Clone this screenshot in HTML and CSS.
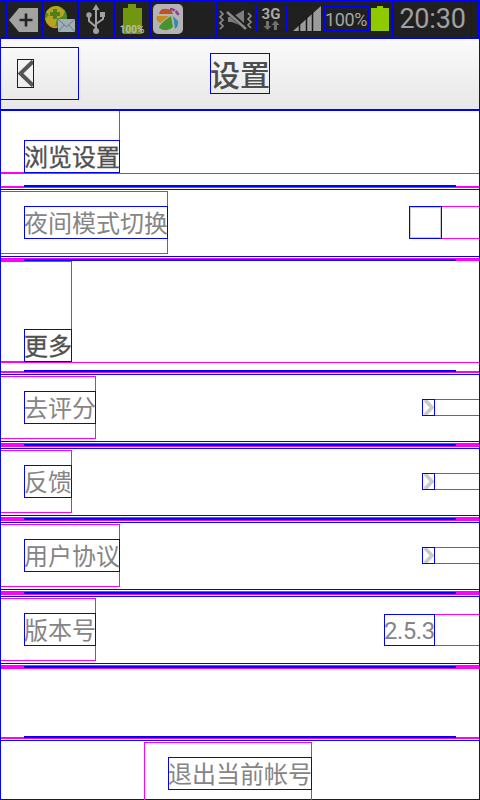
FILE: index.html
```html
<!DOCTYPE html>
<html lang="zh-CN">
<head>
<meta charset="utf-8">
<title>设置</title>
<link rel="stylesheet" href="styles.css">
</head>
<body>
<div class="status">
  <div class="cell"><svg width="34" height="35" viewBox="0 0 34 35"><path d="M12 7H31V31H12L2 19Z" fill="#a2a2a2"/><path d="M19 12.500V25.500M12.500 19H25.500" stroke="#242424" stroke-width="2.600"/></svg></div>
  <div class="cell"><svg width="34" height="35" viewBox="0 0 34 35"><circle cx="13" cy="16" r="11" fill="#4d8b27"/><path d="M3 11Q8 4 15 5L22 10L20 15L14 18L12 26Q4 25 2 18L6 14Z" fill="#b8a222"/><path d="M4 21Q8 27 14 26" stroke="#c39b24" stroke-width="2" fill="none"/><path d="M12 8V18M7 13H17" stroke="#517f1a" stroke-width="4"/><path d="M15 18H32V31H15Z" fill="#a0afb5"/><path d="M15 18L23.500 26L32 18M15 31L21 24M32 31L26 24" fill="none" stroke="#687984"/></svg></div>
  <div class="cell"><svg width="34" height="35" viewBox="0 0 34 35" fill="none" stroke="#a0a0a0" stroke-width="2"><path d="M17 7V30M10 15V20L17 26M24 15V18L17 23"/><path d="M17 3L20.500 9H13.500Z" fill="#a0a0a0" stroke="none"/><circle cx="10" cy="14" r="2.700" fill="#a0a0a0" stroke="none"/><path d="M21 11H26V16H21Z" fill="#a0a0a0" stroke="none"/><circle cx="17" cy="30" r="3" fill="#a0a0a0" stroke="none"/></svg></div>
  <div class="cell"><svg width="34" height="35" viewBox="0 0 34 35"><path d="M13 3H21V7H27V33H8V7H13Z" fill="#719611"/><text x="17" y="31.500" text-anchor="middle" class="tiny">100%</text></svg></div>
  <div class="cell"><svg width="34" height="35" viewBox="0 0 34 35"><rect x="2" y="3" width="30" height="30" rx="5" fill="#b4b4b4"/><path d="M8 13Q9 7 16 8Q21 8 22 13Z" fill="#c15120"/><path d="M19 8Q25 8 28 15" stroke="#8a3a9a" stroke-width="2.500" fill="none" stroke-dasharray="5 1"/><path d="M6 15H18L9 22Q4 19 6 15Z" fill="#c8891f"/><path d="M20 15L22 26Q16 32 8 27Q8 23 20 15Z" fill="#46942b"/><path d="M22 15L27 20Q28 25 24 28Z" fill="#328daf"/></svg></div>
  <div class="cell mute"><svg width="35" height="35" viewBox="0 0 35 35"><path d="M10 16H14L26 9V26L14 21H10Z" fill="#7d7d7d"/><path d="M8 9L29 28" stroke="#202020" stroke-width="5"/><path d="M9 11L28 28" stroke="#8a8a8a" stroke-width="2.500"/><path d="M3 10L6 13L3 16L6 19L3 22L6 25L3 28M31 12L34 15L31 18L34 21L31 24L34 27" transform="translate(-1 0)" stroke="#8d8d8d" stroke-width="1.700" fill="none"/></svg></div>
  <div class="box net"><svg width="29" height="25" viewBox="0 0 29 25"><text x="14" y="13" text-anchor="middle" class="net-text">3G</text><path d="M9 15H12V20H14.500L10.500 24L6.500 20H9Z" fill="#707070"/><path d="M17 24V19H14.500L18.500 14.500L22.500 19H20V24Z" fill="#707070"/></svg></div>
  <div class="box signal"><svg width="36" height="25" viewBox="0 0 36 25"><path d="M6 25L34 0V25Z" fill="#9b9b9b"/><path d="M12.500 17V25M19.500 11V25M25.500 6V25" stroke="#171717" stroke-width="1.500"/></svg></div>
  <div class="box percent"><span>100%</span></div>
  <div class="box battery"><svg width="22" height="25" viewBox="0 0 22 25"><path d="M8 0H14V2H20V25H2V2H8Z" fill="#8fc900"/></svg></div>
  <div class="clock"><span>20:30</span></div>
  <div class="edge"></div>
</div>
<main class="screen">
  <header class="header">
    <div class="back"><svg width="17" height="29" viewBox="0 0 17 29"><path d="M16 2.500L3.500 14.500L16 26.500" fill="none" stroke="#555" stroke-width="4"/><rect x=".5" y=".5" width="16" height="28" fill="none" stroke="#0000ff"/></svg></div>
    <h1 class="title">设置</h1>
  </header>

  <section class="section first"><div class="wrap"><h2 class="label">浏览设置</h2></div></section>
  <div class="divider half"><i></i></div>
  <div class="row"><div class="wrap"><span class="label">夜间模式切换</span></div><div class="control check"><b></b></div></div>
  <div class="divider short"><i></i></div>

  <section class="section second"><div class="wrap"><h2 class="label">更多</h2></div></section>
  <div class="divider half"><i></i></div>
  <div class="row"><div class="wrap"><span class="label">去评分</span></div><div class="control arrow"><svg width="13" height="17" viewBox="0 0 13 17"><path d="M3 1L10 8.500L3 16" fill="none" stroke="#c9c9c9" stroke-width="3.600"/><rect x=".5" y=".5" width="12" height="16" fill="none" stroke="#0000ff"/></svg></div></div>
  <div class="divider"><i></i></div>
  <div class="row"><div class="wrap"><span class="label">反馈</span></div><div class="control arrow"><svg width="13" height="17" viewBox="0 0 13 17"><path d="M3 1L10 8.500L3 16" fill="none" stroke="#c9c9c9" stroke-width="3.600"/><rect x=".5" y=".5" width="12" height="16" fill="none" stroke="#0000ff"/></svg></div></div>
  <div class="divider"><i></i></div>
  <div class="row"><div class="wrap"><span class="label">用户协议</span></div><div class="control arrow"><svg width="13" height="17" viewBox="0 0 13 17"><path d="M3 1L10 8.500L3 16" fill="none" stroke="#c9c9c9" stroke-width="3.600"/><rect x=".5" y=".5" width="12" height="16" fill="none" stroke="#0000ff"/></svg></div></div>
  <div class="divider"><i></i></div>
  <div class="row"><div class="wrap"><span class="label">版本号</span></div><div class="control version"><span>2.5.3</span></div></div>
  <div class="divider"><i></i></div>
  <div class="divider half last"><i></i></div>
  <footer class="footer"><div class="wrap"><span class="label">退出当前帐号</span></div></footer>
</main>
</body>
</html>
```
FILE: styles.css
```css
:root { --blue: #0000ff; --pink: #ff00ff; }
* { box-sizing: border-box; }
body { margin: 0; width: 480px; height: 800px; overflow: hidden; background: #fff; font-family: "Noto Sans CJK SC", sans-serif; }
svg { display: block; flex: none; }
h1, h2 { margin: 0; }

.status { display: flex; height: 39px; padding: 0 0 0 6px; background: #202020; border-top: 1px solid var(--blue); border-bottom: 2px solid var(--blue); font-family: Roboto, sans-serif; }
.cell { width: 36px; height: 36px; flex: none; border: solid var(--blue); border-width: 0 1px; }
.mute { width: 38px; margin-left: 30px; border-left-width: 2px; border-right-width: 1px; }
.box { height: 27px; margin-top: 4px; flex: none; border: 1px solid var(--blue); }
.net { width: 31px; margin-left: 2px; }
.signal { width: 38px; margin-left: -1px; }
.percent { width: 44px; height: 25px; margin-top: 5px; color: #a6a6a6; font-size: 18px; line-height: 25px; text-align: center; white-space: nowrap; letter-spacing: -.4px; }
.percent span { display: block; margin: 0 -4px; }
.battery { width: 24px; }
.clock { width: 80px; flex: none; border: solid var(--blue); border-width: 0 1px 0 2px; color: #a0a0a0; font-size: 27px; line-height: 37px; text-align: center; white-space: nowrap; letter-spacing: -.2px; }
.edge { width: 7px; border-right: 1px solid var(--blue); }
.tiny { font: bold 10px Roboto, sans-serif; fill: #bbb; }
.net-text { font: bold 15px Roboto, sans-serif; fill: #a8a8a8; }

.screen { display: flex; flex-direction: column; height: 761px; border: solid var(--blue); border-width: 0 1px 1px; }
.header { display: grid; grid-template-columns: 78px 1fr 78px; height: 72px; flex: none; background: linear-gradient(#fafafa, #f4f4f4 35%, #e7e7e7); border-bottom: 2px solid var(--blue); }
.back { height: 53px; margin-top: 8px; padding: 11px 0 0 16px; border: 1px solid var(--blue); border-left: 0; }
.title { width: 60px; height: 41px; margin-top: 14px; justify-self: center; box-shadow: inset 0 0 0 1px var(--blue); font-size: 30px; line-height: 40px; font-weight: 500; color: #4d4d4d; white-space: nowrap; }

.wrap { display: flex; align-items: center; border-right: 1px solid var(--pink); }
.wrap::before { content: ""; width: 23px; align-self: stretch; flex: none; }
.label { height: 33px; margin-right: -1px; box-shadow: inset 0 0 0 1px var(--blue); font-size: 24px; line-height: 32px; font-weight: 400; color: #858585; white-space: nowrap; }

.section { display: flex; flex: none; border-bottom: 1px solid var(--pink); }
.section .wrap { align-items: flex-end; }
.section .wrap::before { border-bottom: 1px solid var(--pink); }
.section .label { color: #505050; -webkit-text-stroke: .3px #505050; }
.first { height: 63px; margin-bottom: 11px; }
.second { height: 102px; margin-bottom: 7px; }
.second .wrap { border-top: 1px solid var(--pink); }

.divider { height: 4px; margin: 1px 0; padding: 1px 23px; flex: none; background: var(--pink); }
.divider i { display: block; height: 2px; background: var(--blue); }
.half { height: 3px; margin-top: 0; padding-top: 0; background: linear-gradient(transparent 1px, var(--pink) 1px); }
.short { height: 3px; margin-bottom: 0; padding-bottom: 0; }
.last { margin-top: 66px; }

.row { display: flex; justify-content: space-between; height: 68px; flex: none; padding: 1px 0 2px; border: solid var(--blue); border-width: 1px 0; }
.row .wrap { border-top: 1px solid var(--pink); border-bottom: 1px solid var(--pink); }
.control { align-self: center; display: flex; border: solid var(--pink); border-width: 1px 0; }
.check { width: 70px; height: 33px; }
.check b { width: 33px; height: 33px; margin-top: -1px; background: #fff; border: 1px solid var(--blue); box-shadow: inset 0 0 0 1px #ccc; }
.arrow { width: 57px; height: 17px; }
.arrow svg { margin-top: -1px; }
.version { width: 95px; height: 32px; }
.version span { width: 51px; height: 32px; margin-top: -1px; box-shadow: inset 0 0 0 1px var(--blue); font: 24px/34px Roboto, sans-serif; letter-spacing: -.5px; color: #858585; white-space: nowrap; }

.footer { display: flex; justify-content: center; flex: 1; border-top: 1px solid var(--blue); padding-top: 1px; }
.footer .wrap { height: 58px; margin-right: 24px; border: solid var(--pink); border-width: 1px 1px 0; align-items: flex-start; }
.footer .label { margin-top: 14px; }
```
